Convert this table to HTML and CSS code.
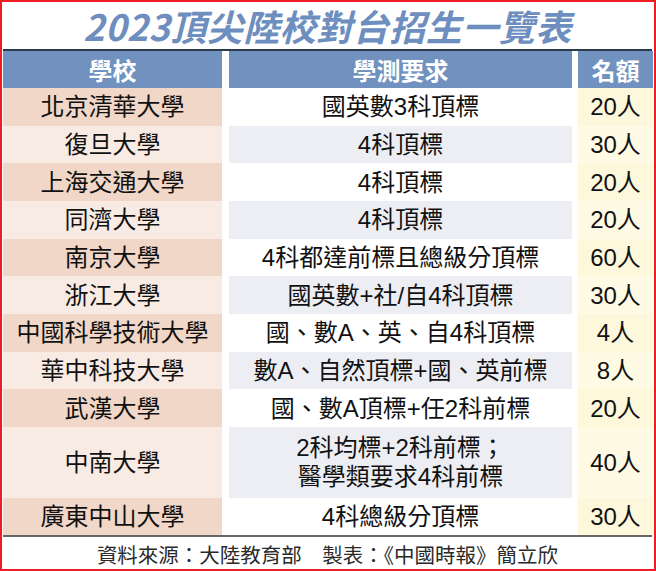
FILE: index.html
```html
<!DOCTYPE html>
<html lang="zh-Hant">
<head>
<meta charset="utf-8">
<title>2023頂尖陸校對台招生一覽表</title>
<link rel="stylesheet" href="styles.css">
</head>
<body>
<div class="frame">
  <h1 class="title">2023頂尖陸校對台招生一覽表</h1>
  <div class="table">
    <div class="cell head">學校</div><div class="cell head">學測要求</div><div class="cell head">名額</div>

    <div class="cell c1 odd">北京清華大學</div><div class="cell c2 odd">國英數3科頂標</div><div class="cell c3 odd">20人</div>
    <div class="cell c1 even">復旦大學</div><div class="cell c2 even">4科頂標</div><div class="cell c3 even">30人</div>
    <div class="cell c1 odd">上海交通大學</div><div class="cell c2 odd">4科頂標</div><div class="cell c3 odd">20人</div>
    <div class="cell c1 even">同濟大學</div><div class="cell c2 even">4科頂標</div><div class="cell c3 even">20人</div>
    <div class="cell c1 odd">南京大學</div><div class="cell c2 odd">4科都達前標且總級分頂標</div><div class="cell c3 odd">60人</div>
    <div class="cell c1 even">浙江大學</div><div class="cell c2 even">國英數+社/自4科頂標</div><div class="cell c3 even">30人</div>
    <div class="cell c1 odd">中國科學技術大學</div><div class="cell c2 odd">國、數A、英、自4科頂標</div><div class="cell c3 odd">4人</div>
    <div class="cell c1 even">華中科技大學</div><div class="cell c2 even">數A、自然頂標+國、英前標</div><div class="cell c3 even">8人</div>
    <div class="cell c1 odd">武漢大學</div><div class="cell c2 odd">國、數A頂標+任2科前標</div><div class="cell c3 odd">20人</div>
    <div class="cell c1 even">中南大學</div><div class="cell c2 even two"><span class="line">2科均標+2科前標；</span><span class="line">醫學類要求4科前標</span></div><div class="cell c3 even">40人</div>
    <div class="cell c1 odd">廣東中山大學</div><div class="cell c2 odd">4科總級分頂標</div><div class="cell c3 odd">30人</div>
  </div>
  <div class="source">資料來源：大陸教育部　製表：《中國時報》簡立欣</div>
</div>
</body>
</html>
```

FILE: styles.css
```css
html, body {
  margin: 0;
  padding: 0;
  background: #ffffff;
}

.frame {
  width: 656px;
  height: 571px;
  box-sizing: border-box;
  border: 2px solid #ee1c24;
  background: #ffffff;
  padding: 0 2px 0 1px;
  font-family: "Liberation Sans", "Noto Sans CJK TC", sans-serif;
  color: #111111;
}

.title {
  margin: 0;
  height: 47px;
  line-height: 47px;
  text-align: center;
  font-family: "Noto Sans CJK TC", sans-serif;
  font-size: 36px;
  font-weight: 700;
  font-style: italic;
  letter-spacing: 0.5px;
  color: #6d8ebe;
  overflow: visible;
}

.table {
  display: grid;
  grid-template-columns: 219px 342px 75px;
  grid-template-rows: 37px repeat(9, 37.67px) 71px 37px;
  column-gap: 7px;
  border-top: 2px solid #2b3a4c;
  border-bottom: 2px solid #666666;
}

.table > .cell:nth-child(3n+2) {
  margin-right: -1px;
}

.cell {
  display: flex;
  align-items: center;
  justify-content: center;
  text-align: center;
  font-size: 24px;
  line-height: 1;
  padding-top: 1px;
  white-space: nowrap;
}

.head {
  background: #7191bf;
  color: #ffffff;
  font-family: "Noto Sans CJK TC", sans-serif;
  font-weight: 700;
}

.c1.odd { background: #f0d7c7; }
.c1.even { background: #f8ebe3; }
.c2.odd { background: #ffffff; }
.c2.even { background: #eceef4; }
.c3.odd { background: #fdf8dc; }
.c3.even { background: #fefae4; }

.two {
  flex-direction: column;
  gap: 5px;
}

.line {
  display: block;
  line-height: 24px;
}

.source {
  height: 32px;
  line-height: 32px;
  padding-top: 3px;
  box-sizing: border-box;
  text-align: center;
  font-size: 20.5px;
  color: #2a2a2a;
}
```
